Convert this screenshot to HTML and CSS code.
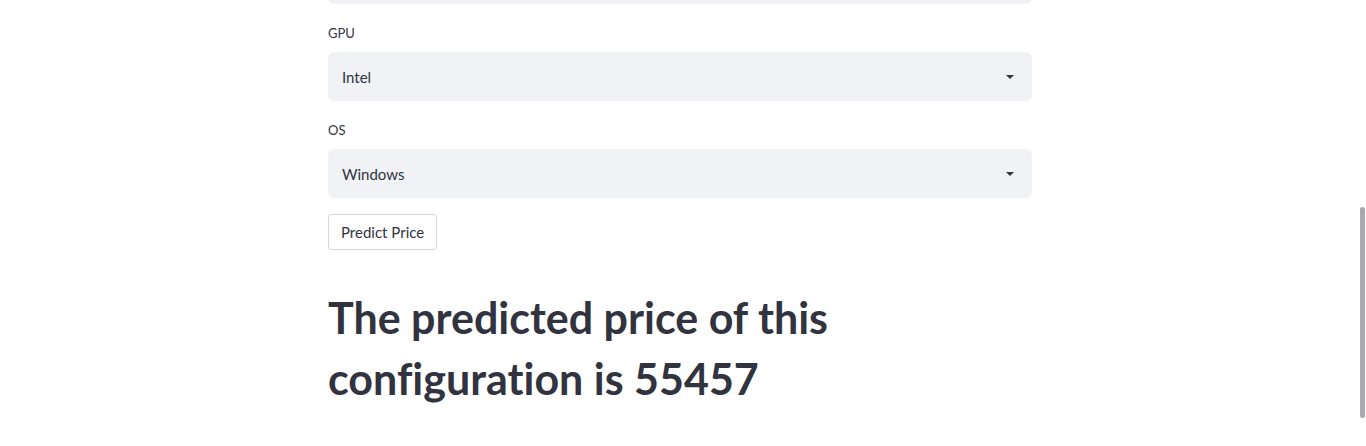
FILE: index.html
```html
<!DOCTYPE html>
<html lang="en">
<head>
<meta charset="utf-8">
<title>Laptop Price Predictor</title>
<link rel="stylesheet" href="styles.css">
</head>
<body>
<main class="app">
  <div class="block">
    <div class="field field-prev">
      <div class="select"><span class="value"></span></div>
    </div>
    <div class="field">
      <label class="label">GPU</label>
      <div class="select"><span class="value">Intel</span><span class="caret"></span></div>
    </div>
    <div class="field">
      <label class="label">OS</label>
      <div class="select"><span class="value">Windows</span><span class="caret"></span></div>
    </div>
    <div class="field">
      <button class="btn" type="button">Predict Price</button>
    </div>
    <h1 class="result">The predicted price of this configuration is 55457</h1>
  </div>
</main>
<div class="scrollbar"></div>
</body>
</html>
```
FILE: styles.css
```css
html, body {
  margin: 0;
  padding: 0;
  height: 100%;
  overflow: hidden;
  background: #ffffff;
}
body {
  font-family: "Source Sans Pro", "Lato", "Liberation Sans", sans-serif;
  font-variant-ligatures: none;
  color: #31333f;
  padding-right: 6px;
  box-sizing: border-box;
}
.app {
  width: 704px;
  margin: 0 auto;
}
.block {
  display: flex;
  flex-direction: column;
  gap: 16px;
  margin-top: -45px;
}
.field {
  display: flex;
  flex-direction: column;
}
.label {
  font-size: 13px;
  line-height: 26px;
  height: 26px;
  margin-bottom: 6px;
  color: #31333f;
}
.select {
  height: 49px;
  background: #f0f2f6;
  border-radius: 6px;
  display: flex;
  align-items: center;
  justify-content: space-between;
  padding: 0 18px 0 14px;
  box-sizing: border-box;
}
.value {
  font-size: 15px;
  color: #31333f;
}
.caret {
  width: 0;
  height: 0;
  border-left: 4px solid transparent;
  border-right: 4px solid transparent;
  border-top: 4px solid #31333f;
}
.btn {
  align-self: flex-start;
  height: 36px;
  padding: 0 12px;
  background: #ffffff;
  border: 1px solid rgba(49, 51, 63, 0.2);
  border-radius: 4px;
  font-family: inherit;
  font-size: 15px;
  color: #31333f;
  cursor: pointer;
}
.result {
  margin: 21px 0 0 0;
  font-size: 43px;
  line-height: 61px;
  font-weight: 700;
  color: #31333f;
  max-width: 530px;
  font-variant-ligatures: none;
}
.scrollbar {
  position: absolute;
  right: 1px;
  top: 207px;
  width: 5px;
  height: 211px;
  border-radius: 3px;
  background: #a8a8ae;
}
```
